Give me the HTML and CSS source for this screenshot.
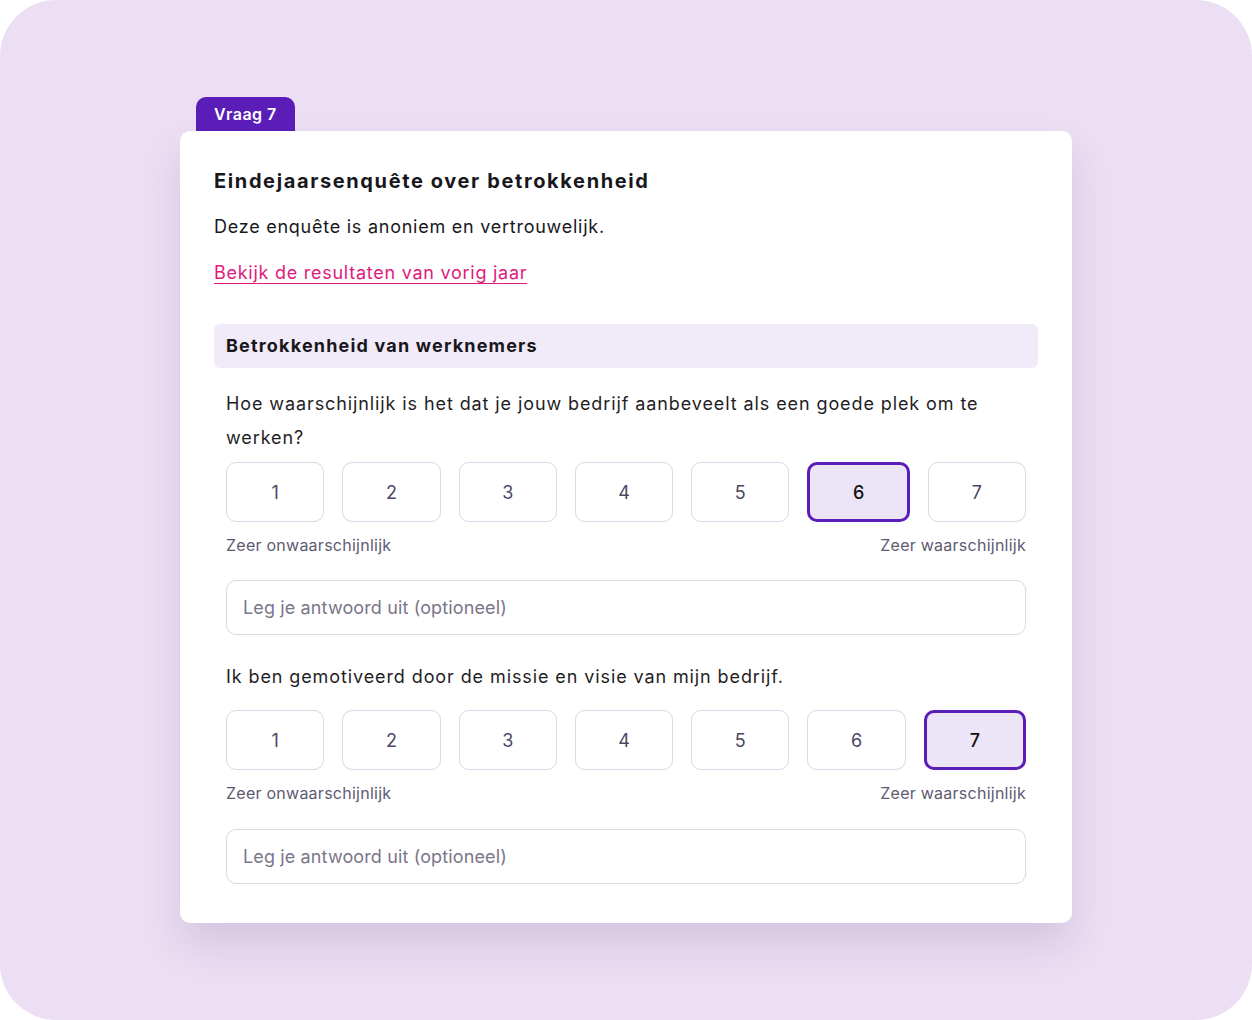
FILE: index.html
```html
<!DOCTYPE html>
<html lang="nl">
<head>
    <meta charset="UTF-8">
    <meta name="viewport" content="width=device-width, initial-scale=1.0">
    <title>Eindejaarsenquête</title>
    <link rel="stylesheet" href="styles.css">
</head>
<body>
    <div class="stage">
        <div class="survey">
            <div class="tab">Vraag 7</div>
            <div class="card">
                <h1 class="title">Eindejaarsenquête over betrokkenheid</h1>
                <p class="intro">Deze enquête is anoniem en vertrouwelijk.</p>
                <a class="link" href="#">Bekijk de resultaten van vorig jaar</a>

                <div class="section">Betrokkenheid van werknemers</div>

                <div class="question">
                    <p class="question-text">Hoe waarschijnlijk is het dat je jouw bedrijf aanbeveelt als een goede plek om te werken?</p>
                    <div class="scale">
                        <button class="option">1</button>
                        <button class="option">2</button>
                        <button class="option">3</button>
                        <button class="option">4</button>
                        <button class="option">5</button>
                        <button class="option selected">6</button>
                        <button class="option">7</button>
                    </div>
                    <div class="scale-labels">
                        <span>Zeer onwaarschijnlijk</span>
                        <span>Zeer waarschijnlijk</span>
                    </div>
                    <input class="answer" type="text" placeholder="Leg je antwoord uit (optioneel)">
                </div>

                <div class="question">
                    <p class="question-text single">Ik ben gemotiveerd door de missie en visie van mijn bedrijf.</p>
                    <div class="scale">
                        <button class="option">1</button>
                        <button class="option">2</button>
                        <button class="option">3</button>
                        <button class="option">4</button>
                        <button class="option">5</button>
                        <button class="option">6</button>
                        <button class="option selected">7</button>
                    </div>
                    <div class="scale-labels">
                        <span>Zeer onwaarschijnlijk</span>
                        <span>Zeer waarschijnlijk</span>
                    </div>
                    <input class="answer last" type="text" placeholder="Leg je antwoord uit (optioneel)">
                </div>
            </div>
        </div>
    </div>
</body>
</html>
```

FILE: styles.css
```css
body {
    margin: 0;
    background-color: white;
    font-family: Inter, "Noto Sans", sans-serif;
    color: #18171c;
}
.stage {
    height: 1020px;
    background-color: #ecdff3;
    border-radius: 56px;
    display: flex;
    justify-content: center;
    padding-top: 97px;
    box-sizing: border-box;
}
.survey {
    width: 892px;
}
.tab {
    display: inline-block;
    margin-left: 16px;
    height: 34px;
    line-height: 34px;
    padding: 0 18px;
    background-color: #5a1db7;
    color: white;
    font-size: 16px;
    font-weight: 600;
    letter-spacing: 0.45px;
    border-radius: 10px 10px 0 0;
    vertical-align: top;
}
.card {
    background-color: white;
    border-radius: 10px;
    padding: 36px 34px 39px;
    box-shadow: 0 22px 40px rgba(90, 60, 130, 0.16);
}
.title {
    margin: 0;
    font-size: 20px;
    line-height: 28px;
    font-weight: 700;
    letter-spacing: 1.62px;
}
.intro {
    margin: 18px 0 0;
    font-size: 18px;
    line-height: 28px;
    letter-spacing: 0.75px;
}
.link {
    display: inline-block;
    margin-top: 18px;
    font-size: 18px;
    line-height: 28px;
    letter-spacing: 0.74px;
    color: #e01a7c;
    text-decoration: underline;
    text-underline-offset: 4px;
    text-decoration-thickness: 1px;
}
.section {
    margin-top: 37px;
    height: 44px;
    line-height: 44px;
    padding: 0 12px;
    background-color: #f1eaf8;
    border-radius: 6px;
    font-size: 18px;
    font-weight: 700;
    letter-spacing: 1.18px;
}
.question {
    padding: 0 12px;
}
.question-text {
    margin: 19px 0 7px;
    font-size: 18px;
    line-height: 34px;
    letter-spacing: 0.9px;
    color: #1f1e24;
}
.question-text.single {
    margin: 25px 0 16px;
}
.scale {
    display: flex;
    gap: 18px;
}
.option {
    flex: 1;
    height: 60px;
    background-color: white;
    border: 1px solid #dcd6e6;
    border-radius: 10px;
    font-family: inherit;
    font-size: 18px;
    color: #4b4760;
    cursor: pointer;
}
.option.selected {
    border: 3px solid #5a1db7;
    background-color: #ece4f7;
    color: #111;
    font-weight: 500;
}
.scale-labels {
    display: flex;
    justify-content: space-between;
    margin-top: 11px;
    font-size: 16px;
    line-height: 24px;
    letter-spacing: 0.25px;
    color: #605b72;
}
.answer {
    display: block;
    width: 100%;
    box-sizing: border-box;
    margin-top: 23px;
    height: 55px;
    padding: 0 16px;
    border: 1px solid #dcd6e6;
    border-radius: 10px;
    font-family: inherit;
    font-size: 18px;
    letter-spacing: 0.13px;
    color: #1f1e24;
}
.answer.last {
    margin-top: 24px;
}
.answer::placeholder {
    color: #7a7589;
}
```
